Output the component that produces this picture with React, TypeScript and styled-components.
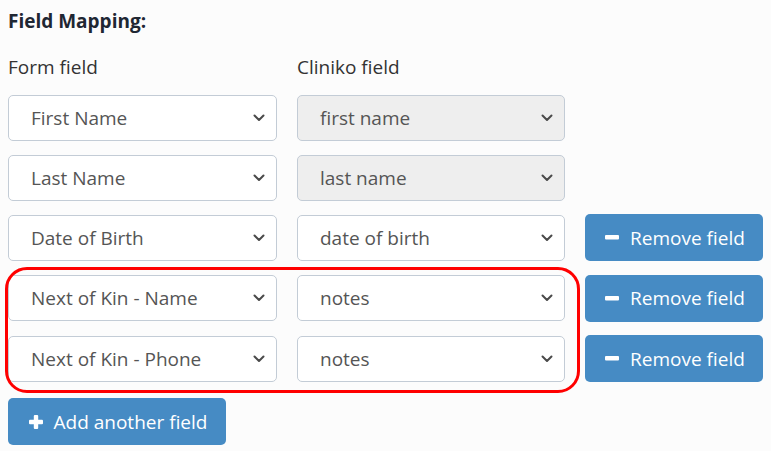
import React from "react";
import styled, { createGlobalStyle } from "styled-components";

const Global = createGlobalStyle`
  html, body { margin: 0; padding: 0; background: #fcfcfc; }
  body { font-family: "Open Sans", "Noto Sans", sans-serif; }
`;

const Page = styled.div`
  position: relative;
  padding: 8px 0 0 8px;
  width: 771px;
  height: 451px;
  box-sizing: border-box;
  overflow: hidden;
`;

const Title = styled.h3`
  margin: 0;
  font-size: 19px;
  font-weight: 700;
  color: #1f2733;
  line-height: 26px;
`;

const Grid = styled.div`
  display: grid;
  grid-template-columns: 269px 268px 178px;
  column-gap: 20px;
  row-gap: 13.5px;
  margin-top: 20px;
  align-items: center;
`;

const Header = styled.div`
  font-size: 19px;
  color: #333;
  line-height: 26px;
  margin-bottom: 1.5px;
`;

const Select = styled.div<{ $disabled?: boolean }>`
  height: 46px;
  box-sizing: border-box;
  border: 1px solid #c3ccd6;
  border-radius: 5px;
  background: ${(p) => (p.$disabled ? "#eeeeee" : "#ffffff")};
  display: flex;
  align-items: center;
  justify-content: space-between;
  padding: 0 11px 0 22px;
  font-size: 19px;
  color: #555;
`;

const Button = styled.button<{ $width?: number }>`
  height: 47px;
  box-sizing: border-box;
  border: none;
  border-radius: 5px;
  background: #468bc4;
  color: #fff;
  font-family: "Open Sans", "Noto Sans", sans-serif;
  font-size: 19px;
  display: flex;
  align-items: center;
  justify-content: center;
  gap: 11px;
  padding: 0 18px 0 20px;
  width: ${(p) => (p.$width ? `${p.$width}px` : "auto")};
  cursor: pointer;
`;

const Empty = styled.div``;

const AddRow = styled.div`
  margin-top: 16px;
`;

const Highlight = styled.div`
  position: absolute;
  left: 5px;
  top: 267px;
  width: 575px;
  height: 126px;
  box-sizing: border-box;
  border: 3px solid #ff0000;
  border-radius: 22px;
  pointer-events: none;
`;

const Chevron = () => (
  <svg width="12" height="8" viewBox="0 0 12 8">
    <path d="M1.5 1.5 L6 6 L10.5 1.5" fill="none" stroke="#4a4a4a" strokeWidth="2" strokeLinecap="round" strokeLinejoin="round" />
  </svg>
);

const Minus = () => (
  <svg width="14" height="5" viewBox="0 0 14 5">
    <rect x="0" y="0" width="14" height="4.5" rx="1" fill="#fff" />
  </svg>
);

const Plus = () => (
  <svg width="14" height="14" viewBox="0 0 14 14">
    <rect x="0" y="4.8" width="14" height="4.4" rx="1" fill="#fff" />
    <rect x="4.8" y="0" width="4.4" height="14" rx="1" fill="#fff" />
  </svg>
);

type Row = { form: string; cliniko: string; fixed?: boolean };

const rows: Row[] = [
  { form: "First Name", cliniko: "first name", fixed: true },
  { form: "Last Name", cliniko: "last name", fixed: true },
  { form: "Date of Birth", cliniko: "date of birth" },
  { form: "Next of Kin - Name", cliniko: "notes" },
  { form: "Next of Kin - Phone", cliniko: "notes" },
];

export default function App() {
  return (
    <Page>
      <Global />
      <Title>Field Mapping:</Title>
      <Grid>
        <Header>Form field</Header>
        <Header>Cliniko field</Header>
        <Empty />
        {rows.map((r, i) => (
          <React.Fragment key={i}>
            <Select>
              <span>{r.form}</span>
              <Chevron />
            </Select>
            <Select $disabled={r.fixed}>
              <span>{r.cliniko}</span>
              <Chevron />
            </Select>
            {r.fixed ? (
              <Empty />
            ) : (
              <Button>
                <Minus />
                Remove field
              </Button>
            )}
          </React.Fragment>
        ))}
      </Grid>
      <AddRow>
        <Button $width={218}>
          <Plus />
          Add another field
        </Button>
      </AddRow>
      <Highlight />
    </Page>
  );
}
